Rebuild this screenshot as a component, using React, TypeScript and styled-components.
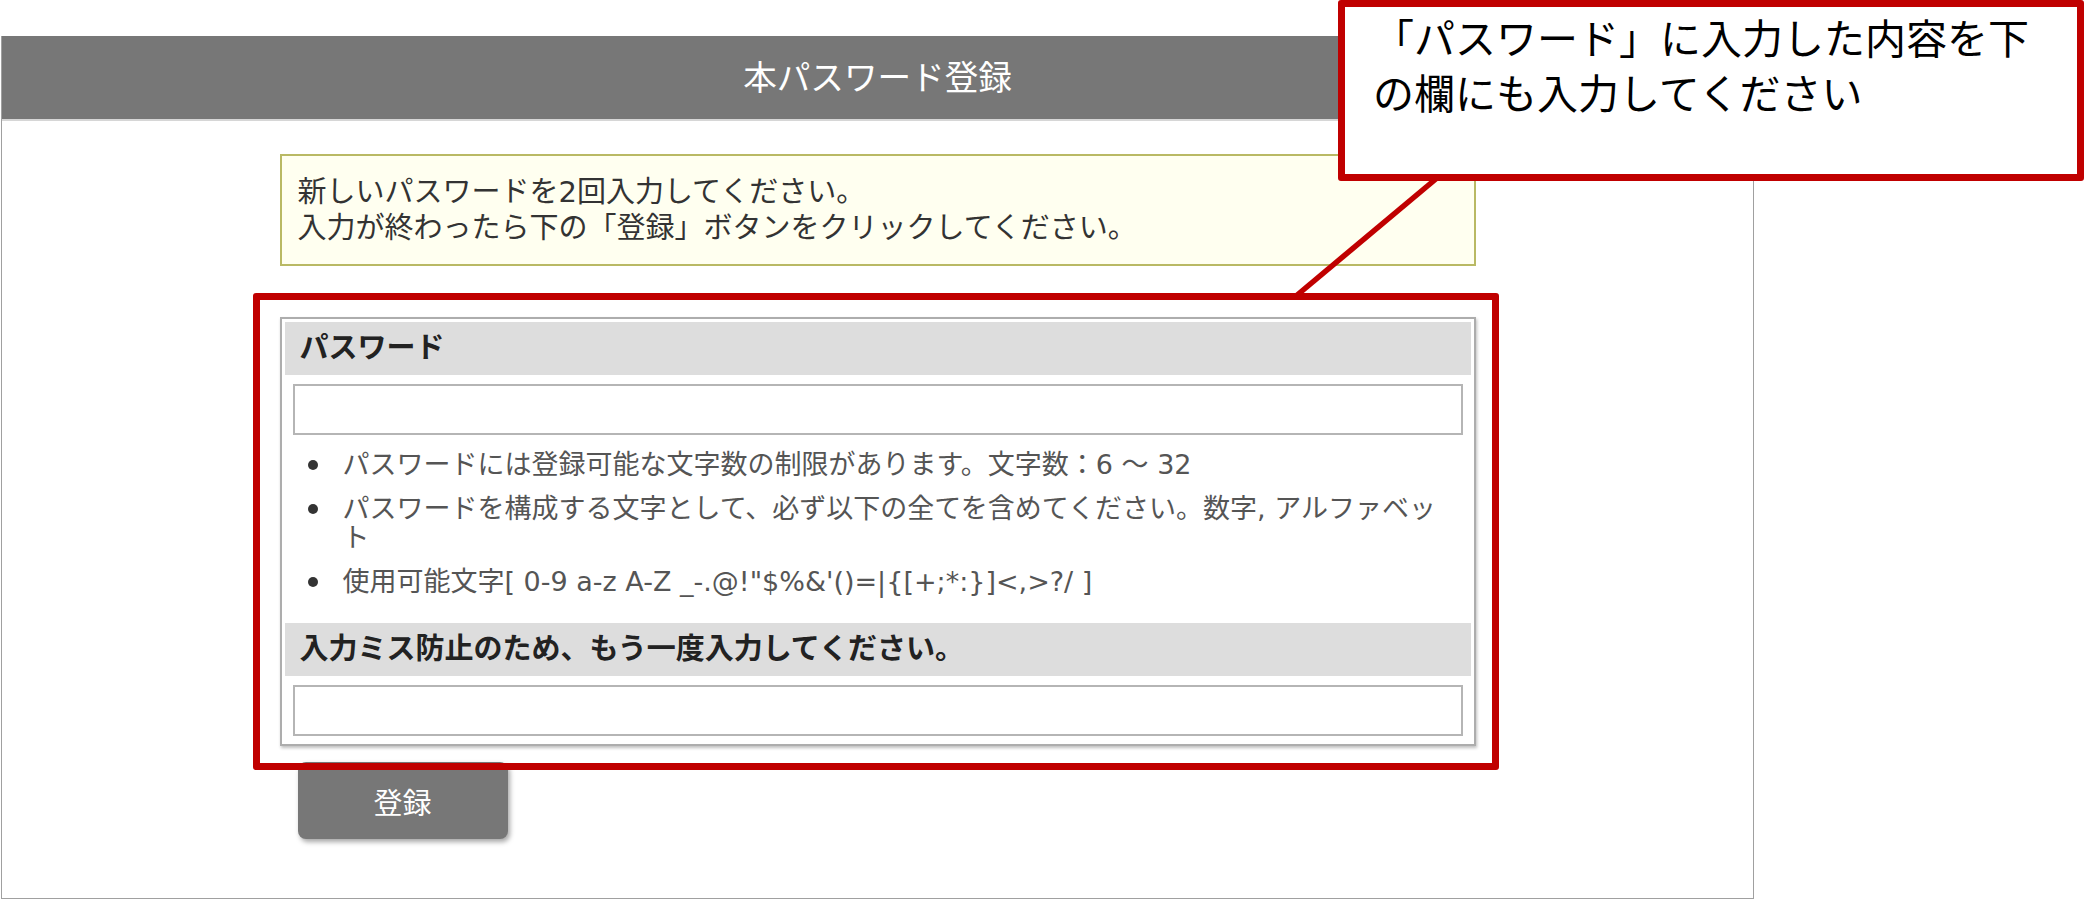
import React from 'react';
import styled, { createGlobalStyle } from 'styled-components';

const GlobalStyle = createGlobalStyle`
  body {
    margin: 0;
    background: #fff;
  }
`;

const Page = styled.div`
  position: relative;
  width: 2084px;
  height: 900px;
  padding-top: 36px;
  box-sizing: border-box;
  overflow: hidden;
  background: #fff;
  font-family: 'Noto Sans CJK JP', 'Noto Sans', sans-serif;
`;

const Panel = styled.div`
  margin-left: 1px;
  width: 1753px;
  height: 863px;
  box-sizing: border-box;
  border: 1px solid #a0a0a0;
  border-top: 0;
`;

const TitleBar = styled.div`
  height: 85px;
  box-sizing: border-box;
  padding-bottom: 4px;
  background: #777;
  border-bottom: 2px solid #d6d6d6;
  display: flex;
  align-items: center;
  justify-content: center;
  color: #fff;
  font-size: 33.6px;
`;

const Content = styled.div`
  width: 1196px;
  margin: 33px auto 0;
`;

// latin glyphs on the page are wide (verdana-like), kana fall back to Noto
const Notice = styled.div`
  border: 2px solid #b9b964;
  background: #fffff0;
  padding: 18px 16px 18px;
  font-family: 'DejaVu Sans', 'Noto Sans CJK JP', sans-serif;
  font-size: 29px;
  line-height: 36px;
  color: #333;
`;

const FormBox = styled.div`
  margin-top: 51px;
  border: 2px solid #adadad;
  padding: 3px 3px 8px;
  background: #fff;
  box-shadow: 1px 2px 3px rgba(0, 0, 0, 0.25);
`;

const SectionHead = styled.div<{ $gap?: number }>`
  height: 53px;
  box-sizing: border-box;
  margin-top: ${(p) => p.$gap ?? 0}px;
  padding: 0 15px 7px;
  background: #ddd;
  line-height: 46px;
  font-size: 29px;
  font-weight: bold;
  color: #222;
`;

const Field = styled.input`
  display: block;
  width: calc(100% - 16px);
  height: 51px;
  margin: 9px 8px 0;
  box-sizing: border-box;
  border: 2px solid #b5b5b5;
  background: #fff;
  outline: none;
`;

const Rules = styled.ul`
  list-style: none;
  margin: 15px 22px 0 0;
  padding: 0;
  font-family: 'DejaVu Sans', 'Noto Sans CJK JP', sans-serif;
  font-size: 27px;
  line-height: 29px;
  color: #555;
`;

const Rule = styled.li`
  position: relative;
  padding-left: 58px;

  & + & {
    margin-top: 15px;
  }

  &::before {
    content: '';
    position: absolute;
    left: 23px;
    top: 10px;
    width: 10px;
    height: 10px;
    border-radius: 50%;
    background: #333;
  }
`;

const SubmitButton = styled.button`
  display: block;
  width: 210px;
  height: 77px;
  margin: 16px 0 0 18px;
  border: none;
  border-radius: 8px;
  background: #777;
  color: #fff;
  font-family: inherit;
  font-size: 29px;
  box-shadow: 2px 3px 5px rgba(0, 0, 0, 0.35);
  cursor: pointer;
`;

// annotation layer drawn over the screenshot
const Highlight = styled.div`
  position: absolute;
  left: 253px;
  top: 293px;
  width: 1246px;
  height: 477px;
  box-sizing: border-box;
  border: 7px solid #c00000;
  border-radius: 3px;
  pointer-events: none;
  z-index: 2;
`;

const Callout = styled.div`
  position: absolute;
  left: 1338px;
  top: 0;
  width: 746px;
  height: 181px;
  box-sizing: border-box;
  border: 7px solid #c00000;
  border-radius: 3px;
  background: #fff;
  padding: 2px 30px 0 28px;
  font-size: 41px;
  line-height: 55px;
  color: #000;
  z-index: 3;
`;

const Pointer = styled.svg`
  position: absolute;
  left: 1280px;
  top: 170px;
  z-index: 3;
  pointer-events: none;
`;

const App = (): JSX.Element => {
  return (
    <Page>
      <GlobalStyle />
      <Panel>
        <TitleBar>本パスワード登録</TitleBar>
        <Content>
          <Notice>
            新しいパスワードを2回入力してください。
            <br />
            入力が終わったら下の「登録」ボタンをクリックしてください。
          </Notice>
          <FormBox>
            <SectionHead>パスワード</SectionHead>
            <Field type="password" />
            <Rules>
              <Rule>パスワードには登録可能な文字数の制限があります。文字数：6 ～ 32</Rule>
              <Rule>
                パスワードを構成する文字として、必ず以下の全てを含めてください。数字, アルファベット
              </Rule>
              <Rule>{'使用可能文字[ 0-9 a-z A-Z _-.@!"$%&\'()=|{[+;*:}]<,>?/ ]'}</Rule>
            </Rules>
            <SectionHead $gap={27}>入力ミス防止のため、もう一度入力してください。</SectionHead>
            <Field type="password" />
          </FormBox>
          <SubmitButton type="button">登録</SubmitButton>
        </Content>
      </Panel>

      <Highlight />
      <Pointer width="170" height="130" viewBox="0 0 170 130">
        <line x1="157" y1="8" x2="16" y2="126" stroke="#c00000" strokeWidth="5.5" />
      </Pointer>
      <Callout>「パスワード」に入力した内容を下の欄にも入力してください</Callout>
    </Page>
  );
};

export default App;
